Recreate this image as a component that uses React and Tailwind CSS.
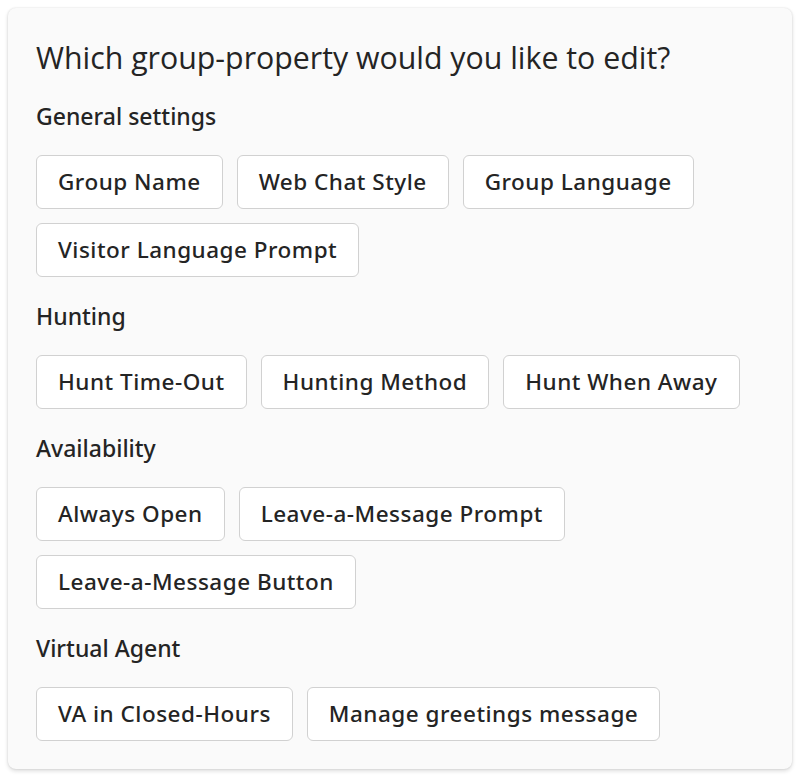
const sections = [
  {
    title: "General settings",
    items: ["Group Name", "Web Chat Style", "Group Language", "Visitor Language Prompt"],
  },
  {
    title: "Hunting",
    items: ["Hunt Time-Out", "Hunting Method", "Hunt When Away"],
  },
  {
    title: "Availability",
    items: ["Always Open", "Leave-a-Message Prompt", "Leave-a-Message Button"],
  },
  {
    title: "Virtual Agent",
    items: ["VA in Closed-Hours", "Manage greetings message"],
  },
];

export default function App() {
  return (
    <div
      className="min-h-screen bg-white p-2 text-[#242424]"
      style={{ fontFamily: '"Segoe UI", "Open Sans", sans-serif' }}
    >
      <div className="w-[784px] rounded-lg bg-[#fafafa] px-7 pb-7 pt-8 shadow-[0_0_2px_rgba(0,0,0,0.12),0_2px_4px_rgba(0,0,0,0.14)]">
        <h1 className="text-[30.3px] leading-9 font-normal">
          Which group-property would you like to edit?
        </h1>

        {sections.map((s) => (
          <div key={s.title} className="mt-[26px] first-of-type:mt-[27px]">
            <h2 className="mb-[26px] font-['Noto_Sans',sans-serif] text-[23px] leading-[26px] font-medium">
              {s.title}
            </h2>
            <div className="flex flex-wrap gap-[14px]">
              {s.items.map((item) => (
                <button
                  key={item}
                  className="h-[54px] rounded-md border border-[#d1d1d1] bg-white px-[21px] font-['Noto_Sans',sans-serif] text-[22.5px] font-medium tracking-[0.5px] text-[#242424]"
                >
                  {item}
                </button>
              ))}
            </div>
          </div>
        ))}
      </div>
    </div>
  );
}
